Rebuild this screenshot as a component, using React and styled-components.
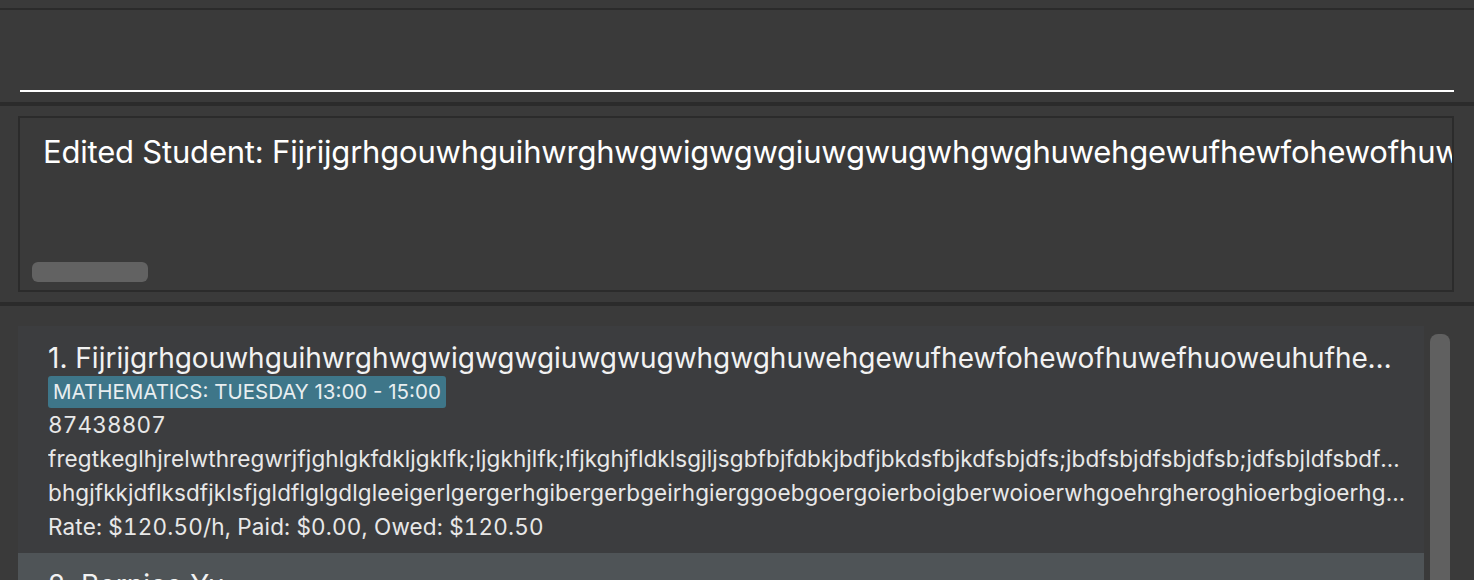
import styled, { createGlobalStyle } from "styled-components";

const GlobalStyle = createGlobalStyle`
    * {
        box-sizing: border-box;
    }

    body {
        margin: 0;
        background: #3a3a3a;
        font-family: Inter, "Noto Sans", sans-serif;
    }
`;

const studentName = "Fijrijgrhgouwhguihwrghwgwigwgwgiuwgwugwhgwghuwehgewufhewfohewofhuwefhuoweuhufhewfhuwefhwuefhwuefhuwehfuwehf";

const students = [
    {
        id: 1,
        name: studentName,
        tags: ["MATHEMATICS: TUESDAY 13:00 - 15:00"],
        phone: "87438807",
        lines: [
            "fregtkeglhjrelwthregwrjfjghlgkfdkljgklfk;ljgkhjlfk;lfjkghjfldklsgjljsgbfbjfdbkjbdfjbkdsfbjkdfsbjdfs;jbdfsbjdfsbjdfsb;jdfsbjldfsbdfsbjdfsbjkdfsbjkdfsb",
            "bhgjfkkjdflksdfjklsfjgldflglgdlgleeigerlgergerhgibergerbgeirhgierggoebgoergoierboigberwoioerwhgoehrgheroghioerbgioerhgoiehrgoiehrgoie",
        ],
        rate: "Rate: $120.50/h, Paid: $0.00, Owed: $120.50",
    },
    {
        id: 2,
        name: "Bernice Yu",
        tags: [],
        phone: "99272758",
        lines: ["Blk 30 Lorong 3 Serangoon Gardens, #07-18", "berniceyu@example.com"],
        rate: "Rate: $50.00/h, Paid: $0.00, Owed: $0.00",
    },
];

export default function App() {
    return (
        <>
            <GlobalStyle />
            <Window>
                <TopStrip />
                <CommandSection>
                    <CommandField />
                </CommandSection>
                <ResultSection>
                    <ResultBox>
                        <ResultText>Edited Student: {studentName}</ResultText>
                        <HScrollThumb />
                    </ResultBox>
                </ResultSection>
                <ListSection>
                    <ListColumn>
                        {students.map((s, i) => (
                            <Card key={s.id} $alt={i % 2 === 1}>
                                <Name>{s.id}. {s.name}</Name>
                                {s.tags.length > 0 && (
                                    <Tags>
                                        {s.tags.map(t => <Tag key={t}>{t}</Tag>)}
                                    </Tags>
                                )}
                                <Detail $num>{s.phone}</Detail>
                                {s.lines.map(l => <Detail key={l}>{l}</Detail>)}
                                <Detail $num>{s.rate}</Detail>
                            </Card>
                        ))}
                    </ListColumn>
                    <ScrollTrack>
                        <ScrollThumb />
                    </ScrollTrack>
                </ListSection>
            </Window>
        </>
    );
}

const Window = styled.div`
    width: 1474px;
    height: 580px;
    overflow: hidden;
    background: #3a3a3a;
    display: flex;
    flex-direction: column;
`;

const TopStrip = styled.div`
    height: 10px;
    flex-shrink: 0;
    border-bottom: 2px solid #2b2b2b;
`;

const CommandSection = styled.div`
    height: 96px;
    flex-shrink: 0;
    padding: 0 20px;
    display: flex;
    align-items: flex-end;
    padding-bottom: 10px;
    border-bottom: 4px solid #2b2b2b;
`;

const CommandField = styled.div`
    width: 100%;
    height: 2px;
    background: #ffffff;
`;

const ResultSection = styled.div`
    height: 200px;
    flex-shrink: 0;
    padding: 10px 20px 10px 18px;
    border-bottom: 4px solid #2b2b2b;
`;

const ResultBox = styled.div`
    height: 176px;
    border: 2px solid #2b2b2b;
    overflow: hidden;
    display: flex;
    flex-direction: column;
    justify-content: space-between;
    padding: 14px 0 8px 12px;
`;

const ResultText = styled.div`
    color: #ffffff;
    font-size: 31px;
    line-height: 40px;
    letter-spacing: -0.2px;
    white-space: nowrap;
    padding-left: 11px;
`;

const HScrollThumb = styled.div`
    width: 116px;
    height: 20px;
    border-radius: 6px;
    background: #626262;
`;

const ListSection = styled.div`
    flex: 1;
    min-height: 0;
    display: flex;
    padding: 20px 24px 0 18px;
    overflow: hidden;
`;

const ListColumn = styled.div`
    width: 1406px;
    flex-shrink: 0;
    display: flex;
    flex-direction: column;
`;

const Card = styled.div`
    background: ${p => (p.$alt ? "#4f5457" : "#3c3d3f")};
    padding: 14px 14px 9px 30px;
    flex-shrink: 0;
`;

const Name = styled.div`
    color: #f2f2f2;
    font-size: 28px;
    line-height: 36px;
    white-space: nowrap;
    overflow: hidden;
    text-overflow: ellipsis;
`;

const Tags = styled.div`
    display: flex;
    gap: 6px;
`;

const Tag = styled.span`
    background: #3e7689;
    color: #e8eef0;
    font-size: 20.5px;
    line-height: 32px;
    padding: 0 5px;
    border-radius: 3px;
`;

const Detail = styled.div`
    color: #e8e8e8;
    font-size: 22.5px;
    line-height: 34px;
    white-space: nowrap;
    overflow: hidden;
    text-overflow: ellipsis;
    font-variant-numeric: ${p => (p.$num ? "tabular-nums" : "normal")};
    letter-spacing: ${p => (p.$num ? "0.17px" : "0.1px")};
`;

const ScrollTrack = styled.div`
    width: 20px;
    margin-left: 6px;
    padding-top: 8px;
`;

const ScrollThumb = styled.div`
    height: 400px;
    border-radius: 8px;
    background: #606060;
`;
